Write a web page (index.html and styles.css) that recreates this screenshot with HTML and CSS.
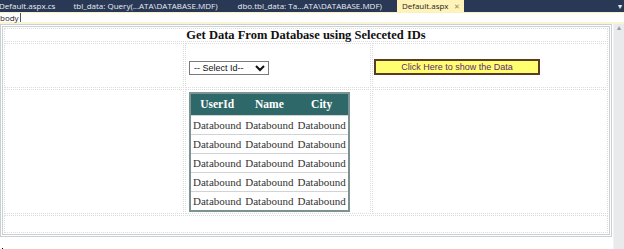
FILE: index.html
```html
<!DOCTYPE html>
<html lang="en">
<head>
    <meta charset="UTF-8">
    <title>Default.aspx - Design</title>
    <link rel="stylesheet" href="styles.css">
</head>
<body>
    <div class="tabs">
        <div class="tab first">Default.aspx.cs</div>
        <div class="tab">tbl_data: Query(...ATA\DATABASE.MDF)</div>
        <div class="tab">dbo.tbl_data: Ta...ATA\DATABASE.MDF)</div>
        <div class="tab active">Default.aspx <span class="close">&#x2715;</span></div>
        <div class="tab-menu">&#x25BE;</div>
    </div>
    <div class="crumb">
        <span class="tag">body</span>
    </div>

    <div class="workspace">
        <div class="canvas">
            <table class="design">
                <tr>
                    <td colspan="3" class="title">Get Data From Database using Seleceted IDs</td>
                </tr>
                <tr class="controls">
                    <td class="col-a"></td>
                    <td class="col-b">
                        <select class="id-select">
                            <option>-- Select Id--</option>
                        </select>
                    </td>
                    <td class="col-c">
                        <button class="show-button">Click Here to show the Data</button>
                    </td>
                </tr>
                <tr class="results">
                    <td class="col-a"></td>
                    <td class="col-b">
                        <table class="grid">
                            <tr>
                                <th>UserId</th>
                                <th>Name</th>
                                <th>City</th>
                            </tr>
                            <tr><td>Databound</td><td>Databound</td><td>Databound</td></tr>
                            <tr><td>Databound</td><td>Databound</td><td>Databound</td></tr>
                            <tr><td>Databound</td><td>Databound</td><td>Databound</td></tr>
                            <tr><td>Databound</td><td>Databound</td><td>Databound</td></tr>
                            <tr><td>Databound</td><td>Databound</td><td>Databound</td></tr>
                        </table>
                    </td>
                    <td class="col-c"></td>
                </tr>
                <tr class="spacer">
                    <td colspan="3"></td>
                </tr>
            </table>
            <div class="caret"></div>
        </div>
        <div class="vscroll">
            <span class="arrow">&#x25B4;</span>
        </div>
    </div>
</body>
</html>
```

FILE: styles.css
```css
body {
    margin: 0;
    padding: 0;
    width: 624px;
    height: 249px;
    overflow: hidden;
    background: #fff;
    font-family: 'Liberation Serif', serif;
}

.tabs {
    display: flex;
    align-items: stretch;
    height: 12px;
    background-color: #293955;
    font-family: 'Open Sans', sans-serif;
    font-size: 8px;
    line-height: 12px;
    color: #e8ecf4;
}

.tab {
    padding: 0 10px;
    white-space: nowrap;
}

.tab.first {
    margin-left: -11px;
    padding-right: 8px;
}

.tab.active {
    margin-left: 5px;
    background-color: #fff3b8;
    color: #1d1d1d;
    padding: 0 4px 0 5px;
}

.close {
    color: #8a8a70;
    margin-left: 3px;
    font-size: 7px;
}

.tab-menu {
    margin-left: auto;
    padding-right: 2px;
    font-size: 8px;
}

.crumb {
    height: 9px;
    border-top: 1px solid #fdf0c0;
    border-bottom: 2px solid #fbf3d6;
    font-family: 'Open Sans', sans-serif;
    font-size: 8px;
    line-height: 9px;
    color: #222;
}

.tag {
    display: inline-block;
    padding: 0 1px 0 0;
    border-right: 1px solid #555;
}

.workspace {
    display: flex;
    height: 225px;
}

.canvas {
    flex: 1;
    padding: 0;
}

.vscroll {
    width: 10px;
    background-color: #e9eaec;
    border-left: 1px solid #f3f3f3;
    text-align: center;
    font-size: 8px;
    color: #9a9a9a;
    line-height: 8px;
}

.design {
    width: 612px;
    border: 3px double #c9d1d4;
    border-collapse: separate;
    border-spacing: 1px;
}

.design td {
    border: 1px dotted #dcdcdc;
    padding: 0;
}

.title {
    height: 12px;
    text-align: center;
    font-weight: bold;
    font-size: 12.5px;
    line-height: 12px;
    color: #111;
}

.col-a {
    width: 178px;
}

.col-b {
    width: 181px;
    padding-left: 3px !important;
}

.col-c {
    padding-left: 1px !important;
}

.controls td {
    height: 43px;
    vertical-align: middle;
}

.results td {
    height: 123px;
    vertical-align: middle;
}

.spacer td {
    height: 16px;
}

.id-select {
    width: 80px;
    height: 14px;
    padding: 0;
    font-family: 'Liberation Sans', sans-serif;
    font-size: 9px;
    border: 1px solid #7a7a7a;
    background: #fff;
    color: #111;
}

.show-button {
    width: 166px;
    height: 16px;
    padding: 0;
    background-color: #ffff70;
    border: 2px solid #5d3a26;
    font-family: 'Liberation Sans', sans-serif;
    font-size: 9px;
    color: #5b2a7a;
}

.grid {
    border-collapse: collapse;
    border: 2px solid #7d9292;
    font-size: 11px;
    color: #333;
}

.design .grid td, .grid th {
    border: none;
    border-bottom: 1px solid #d0d4d4;
    padding: 0 2px;
    height: 18px;
    white-space: nowrap;
    text-align: center;
}

.grid th {
    height: 21px;
    background-color: #2f6868;
    color: #fff;
    font-weight: bold;
    font-size: 11.5px;
}

.caret {
    width: 1px;
    height: 6px;
    margin: 11px 0 0 2px;
    background: #000;
}
```
